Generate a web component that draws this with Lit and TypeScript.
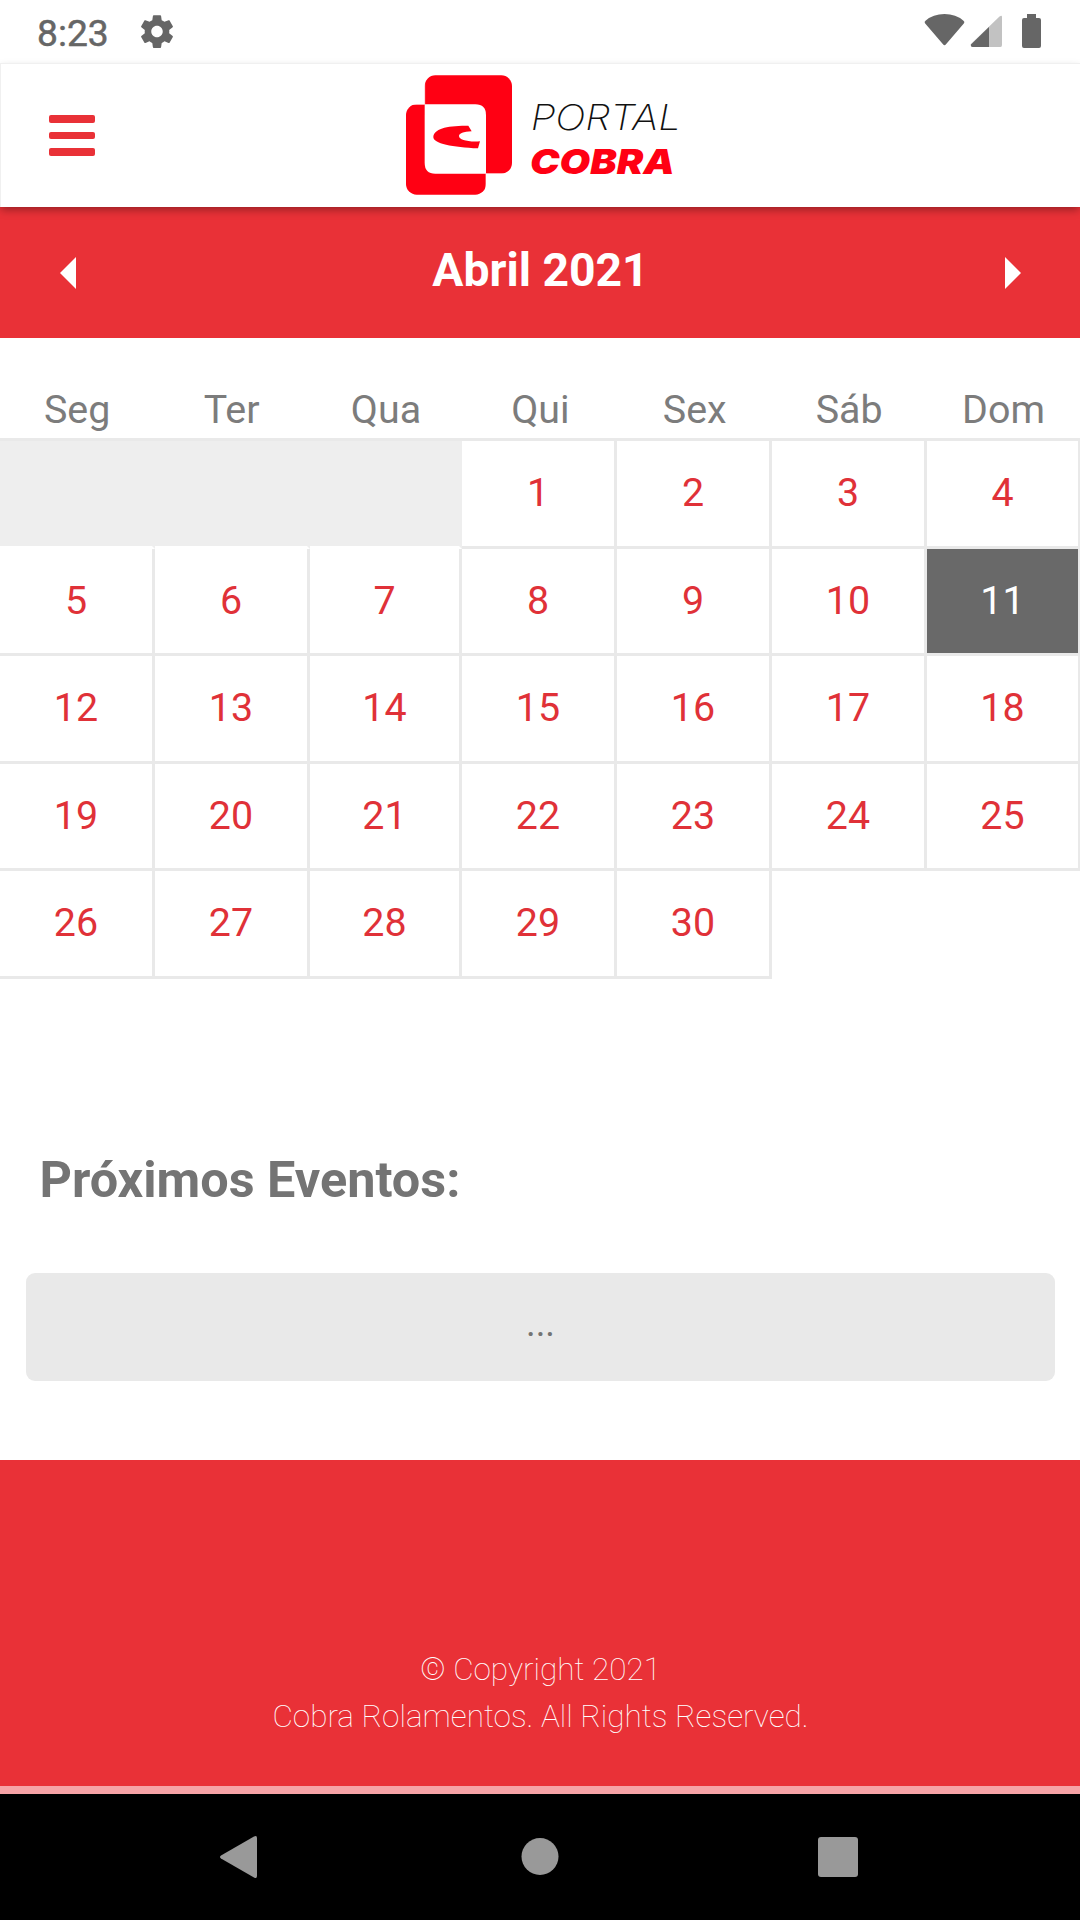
import { LitElement, html, css, svg } from "lit";
import { customElement, state } from "lit/decorators.js";
import { classMap } from "lit/directives/class-map.js";

const WEEKDAYS = ["Seg", "Ter", "Qua", "Qui", "Sex", "Sáb", "Dom"];
const LEADING_BLANKS = 3;
const DAYS_IN_MONTH = 30;

@customElement("status-bar")
class StatusBar extends LitElement {
  static styles = css`
    :host { display: flex; align-items: center; height: 63px; background: #fff; color: #666; }
    .clock { margin-left: 37px; width: 73px; font-size: 37.200px; line-height: 63px; font-weight: 400; -webkit-text-stroke: .5px #666; white-space: nowrap; padding-top: 4px; box-sizing: border-box; }
    .gear { margin-left: 27px; }
    .signals { margin-left: auto; }
    svg { display: block; fill: currentColor; }
  `;
  render() {
    return html`
      <span class="clock">8:23</span>
      <svg class="gear" width="40" height="63" viewBox="0 0 40 63">
        <g transform="translate(20 31.6) scale(1.64)">
          <path d="M9.43.98c.04-.32.07-.64.07-.98s-.03-.66-.07-.98l2.11-1.65c.19-.15.24-.42.12-.64l-2-3.46c-.12-.22-.39-.3-.61-.22l-2.49 1c-.52-.4-1.08-.73-1.69-.98l-.38-2.65C4.46-9.820 4.250-10 4-10h-4c-.25 0-.46.18-.49.42l-.38 2.650c-.61.250-1.170.590-1.690.980l-2.490-1c-.23-.090-.49 0-.61.220l-2 3.460c-.13.220-.070.490.12.640l2.110 1.650c-.04.320-.070.650-.070.980s.030.660.070.980l-2.110 1.650c-.19.150-.24.420-.12.640l2 3.460c.12.220.39.300.61.220l2.490-1c.52.400 1.080.730 1.690.980l.38 2.650c.03.240.24.420.49.420h4c.25 0 .46-.18.49-.42l.38-2.650c.61-.250 1.170-.590 1.690-.980l2.490 1c.23.090.49 0 .61-.220l2-3.460c.12-.220.070-.490-.12-.640zM2 3.500c-1.930 0-3.500-1.570-3.500-3.500s1.570-3.500 3.500-3.500 3.500 1.570 3.500 3.500-1.570 3.500-3.500 3.500z" transform="translate(-2 0)"/>
        </g>
      </svg>
      <svg class="signals" width="160" height="63" viewBox="0 0 160 63">
        <path d="M5.200 23.400Q3.800 22 5.500 20.700Q13 14 24.500 14T43.500 20.700Q45.200 22 43.800 23.400L26 44.300Q24.500 46 23 44.300Z"/>
        <path d="M51 45V44L79.500 16.500Q82 15 82 17V45Q82 47 80.500 47H52Q50.500 47 51 45Z" opacity=".4"/>
        <path d="M51.200 44.300L69 27V47H52.500Q50 46.500 51.200 44.300Z"/>
        <path d="M107 14h9v4h3q2 0 2 2v26q0 2-2 2h-15q-2 0-2-2V20q0-2 2-2h3z"/>
      </svg>
    `;
  }
}

@customElement("portal-header")
class PortalHeader extends LitElement {
  static styles = css`
    :host {
      display: grid; grid-template-columns: 380px 320px 1fr; height: 144px; box-sizing: border-box;
      background: #fff; border-top: 1px solid #f0f0f0; border-left: 1px solid #f0f0f0;
      position: relative; box-shadow: 0 4px 8px -1px rgba(0, 0, 0, .34);
    }
    .menu { display: flex; flex-direction: column; gap: 9px; padding: 51px 0 0 48px; }
    .bar { width: 46px; height: 7.600px; border-radius: 2px; background: #e93137; }
    .logo { display: block; margin-left: -1px; }
    .portal { font: italic 200 106px Inter, sans-serif; fill: #111; }
    .cobra { font: italic 900 104px Inter, sans-serif; fill: #ff0013; }
  `;
  render() {
    return html`
      <div class="menu"><span class="bar"></span><span class="bar"></span><span class="bar"></span></div>
      <svg class="logo" width="320" height="143" viewBox="0 27 960 429">
        <rect x="134" y="61" width="262" height="295" rx="32" fill="#ff0013"/>
        <rect x="78" y="148" width="240" height="271" rx="32" fill="#ff0013"/>
        <path d="M134 148H286Q318 148 318 180V356H166Q134 356 134 324Z" fill="#fff"/>
        <path d="M134 61V148H78M318 419V356H396" fill="none" stroke="#fff" stroke-width="2"/>
        <path d="M160 245C162 222 200 211 265 212L275 229C250 230 237 236 237 243C237 254 264 262 300 259L294 280C220 276 158 266 160 245Z" fill="#ff0013"/>
        <text class="portal" x="452" y="225" textLength="450" lengthAdjust="spacingAndGlyphs">PORTAL</text>
        <text class="cobra" x="450" y="356" textLength="434" lengthAdjust="spacingAndGlyphs">COBRA</text>
      </svg>
    `;
  }
}

@customElement("month-calendar")
class MonthCalendar extends LitElement {
  @state() private selected = 11;

  static styles = css`
    :host { display: block; }
    .band { display: flex; align-items: center; justify-content: space-between; box-sizing: border-box; height: 131px; padding: 0 58px 0 59px; background: #e93137; color: #fff; }
    .band svg { display: block; fill: #fff; }
    .title { font-size: 46.300px; font-weight: 700; line-height: 56px; padding-bottom: 5px; }
    .weekdays, .grid { display: grid; grid-template-columns: 155px 155px 152px 155px 155px 155px 154px; text-align: center; font-size: 39.400px; }
    .weekdays { box-sizing: border-box; grid-template-columns: repeat(7, 154.400px); color: #7c7c7c; padding-top: 47px; height: 100px; line-height: 50px; }
    .grid { border-top: 3px solid #e9e9e9; color: #e03138; }
    .day { box-sizing: border-box; height: 107.600px; line-height: 103px; border-right: 3px solid #e9e9e9; border-bottom: 3px solid #e9e9e9; }
    .blank { background: #eee; border-right-color: #eee; border-bottom-color: #fff; }
    .selected { background: #696969; color: #fff; }
  `;
  render() {
    return html`
      <div class="band">
        <svg width="18" height="34" viewBox="0 0 18 34"><path d="M17 1v32L1 17z"/></svg>
        <span class="title">Abril 2021</span>
        <svg width="18" height="34" viewBox="0 0 18 34"><path d="M1 1v32L17 17z"/></svg>
      </div>
      <div class="weekdays">${WEEKDAYS.map((d) => html`<span>${d}</span>`)}</div>
      <div class="grid">
        ${Array.from({ length: LEADING_BLANKS }, () => html`<span class="day blank"></span>`)}
        ${Array.from({ length: DAYS_IN_MONTH }, (_, i) => i + 1).map((n) => html`
          <span class=${classMap({ day: true, selected: n === this.selected })} @click=${() => { this.selected = n; }}>${n}</span>`)}
      </div>
    `;
  }
}

@customElement("navigation-bar")
class NavigationBar extends LitElement {
  static styles = css`
    :host { display: flex; align-items: center; justify-content: space-between; height: 126px; padding: 0 220px 0 219px; background: #000; }
    svg { display: block; fill: #999; }
  `;
  render() {
    const icon = (shape: unknown) => html`<svg width="44" height="44" viewBox="0 0 44 44">${shape}</svg>`;
    return html`
      ${icon(svg`<path d="M35 1.500Q38 0 38 3V41Q38 44 35 42.500L2 23.500Q0 22 2 20.500Z"/>`)}
      ${icon(svg`<circle cx="22" cy="21.500" r="18.500"/>`)}
      ${icon(svg`<rect x="2" y="2" width="40" height="40" rx="3"/>`)}
    `;
  }
}

@customElement("app-root")
class AppRoot extends LitElement {
  static styles = css`
    :host { display: flex; flex-direction: column; width: 1080px; height: 1920px; overflow: hidden; background: #fff; font-family: Roboto, "Liberation Sans", sans-serif; }
    portal-header { z-index: 1; }
    .events { display: flex; flex-direction: column; height: 481px; box-sizing: border-box; padding-top: 169px; }
    .heading { margin: 0 0 0 39.500px; font-size: 50.400px; line-height: 64px; font-weight: 700; color: #747474; }
    .card { margin: 61px 25px 0 26px; height: 108px; border-radius: 9px; background: #e9e9e9; color: #747474; text-align: center; font-size: 36.750px; line-height: 102px; }
    .footer { flex: 1; box-sizing: border-box; padding: 186px 0 0 1px; background: #e93137; border-bottom: 8px solid #f6a3a6; color: #fff; font-size: 31.500px; line-height: 47px; font-weight: 100; text-align: center; }
    .footer p { margin: 0; }
  `;
  render() {
    return html`
      <status-bar></status-bar>
      <portal-header></portal-header>
      <month-calendar></month-calendar>
      <section class="events">
        <h2 class="heading">Próximos Eventos:</h2>
        <div class="card">...</div>
      </section>
      <footer class="footer">
        <p>© Copyright 2021</p>
        <p>Cobra Rolamentos. All Rights Reserved.</p>
      </footer>
      <navigation-bar></navigation-bar>
    `;
  }
}
